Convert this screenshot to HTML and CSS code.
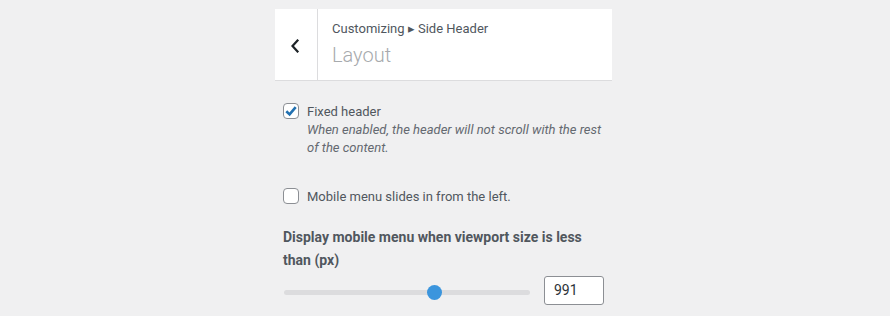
FILE: index.html
```html
<!DOCTYPE html>
<html>
<head>
<meta charset="utf-8">
<link rel="stylesheet" href="styles.css">
</head>
<body>
<div class="panel">
  <div class="head">
    <button class="back" aria-label="Back">
      <svg width="10" height="14" viewBox="0 0 10 14"><path d="M7.5 1.5 L2.5 7 L7.5 12.5" fill="none" stroke="#1d2327" stroke-width="2.2" stroke-linecap="square"/></svg>
    </button>
    <div class="titles">
      <div class="crumb">Customizing &#9656; Side Header</div>
      <div class="title">Layout</div>
    </div>
  </div>
  <div class="controls">
    <div class="check-row">
      <span class="box checked">
        <svg width="14" height="14" viewBox="0 0 14 14"><path d="M2.3 7.2 L5.6 10.4 L11.7 3.2" fill="none" stroke="#2271b1" stroke-width="2.6"/></svg>
      </span>
      <div class="check-text">
        <div class="label">Fixed header</div>
        <div class="desc">When enabled, the header will not scroll with the rest of the content.</div>
      </div>
    </div>
    <div class="check-row second">
      <span class="box"></span>
      <div class="check-text">
        <div class="label">Mobile menu slides in from the left.</div>
      </div>
    </div>
    <div class="range-ctl">
      <div class="range-title">Display mobile menu when viewport size is less than (px)</div>
      <div class="range-row">
        <div class="track"><span class="thumb"></span></div>
        <div class="num">991</div>
      </div>
    </div>
  </div>
</div>
</body>
</html>
```
FILE: styles.css
```css
html, body {
  margin: 0;
  padding: 0;
  background: #f0f0f1;
  font-family: Roboto, "Liberation Sans", sans-serif;
  color: #50575e;
}
.panel {
  width: 337px;
  margin-left: 275px;
  padding-top: 9px;
}
.head {
  display: flex;
  background: #fff;
  height: 71px;
  border-bottom: 1px solid #dcdcde;
}
.back {
  width: 43px;
  border: none;
  border-right: 1px solid #dcdcde;
  background: #fff;
  padding: 0;
  display: flex;
  align-items: center;
  justify-content: center;
}
.back svg { margin-left: -2px; margin-top: 2px; }
.titles {
  padding-left: 14px;
  padding-top: 11px;
}
.crumb {
  font-size: 13px;
  line-height: 18px;
  color: #50575e;
}
.title {
  font-size: 20px;
  font-weight: 300;
  line-height: 26px;
  color: #a7aaad;
  margin-top: 4px;
}
.controls {
  padding: 22px 8px 0 8px;
}
.check-row {
  display: flex;
  align-items: flex-start;
  gap: 8px;
}
.check-row.second {
  margin-top: 31px;
}
.box {
  flex: none;
  width: 14px;
  height: 14px;
  border: 1px solid #8c8f94;
  border-radius: 4px;
  background: #fff;
  display: flex;
  align-items: center;
  justify-content: center;
}
.label {
  font-size: 13px;
  line-height: 17px;
  color: #50575e;
}
.desc {
  font-size: 13px;
  font-style: italic;
  line-height: 18px;
  color: #646970;
  margin-top: 1px;
}
.range-ctl {
  margin-top: 21px;
}
.range-title {
  font-size: 14px;
  font-weight: 700;
  line-height: 23px;
  color: #50575e;
}
.range-row {
  display: flex;
  align-items: flex-start;
  margin-top: 4px;
}
.track {
  position: relative;
  margin-left: 1px;
  margin-top: 14px;
  width: 246px;
  height: 5px;
  background: #dcdcde;
  border-radius: 3px;
}
.thumb {
  position: absolute;
  left: 143px;
  top: -5px;
  width: 15px;
  height: 15px;
  border-radius: 50%;
  background: #3b95dd;
}
.num {
  margin-left: 14px;
  width: 49px;
  height: 27px;
  border: 1px solid #8c8f94;
  border-radius: 3px;
  background: #fff;
  padding-left: 9px;
  font-size: 14px;
  line-height: 27px;
  color: #2c3338;
}
```
